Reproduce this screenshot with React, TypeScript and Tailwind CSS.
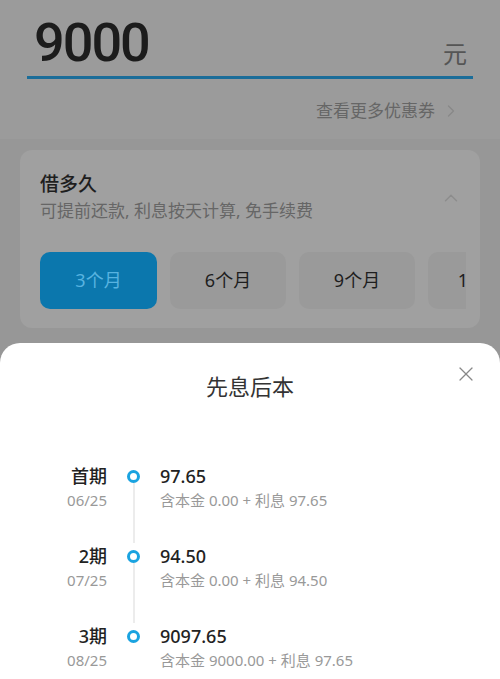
import { ChevronRight, ChevronUp, X } from "lucide-react"

const terms = [
  { label: "3个月", active: true },
  { label: "6个月", active: false },
  { label: "9个月", active: false },
  { label: "12个月", active: false },
]

const plan = [
  { period: "首期", date: "06/25", total: "97.65", detail: "含本金 0.00 + 利息 97.65" },
  { period: "2期", date: "07/25", total: "94.50", detail: "含本金 0.00 + 利息 94.50" },
  { period: "3期", date: "08/25", total: "9097.65", detail: "含本金 9000.00 + 利息 97.65" },
]

const font = { fontFamily: '"Noto Sans", "Noto Sans CJK SC", sans-serif' }

export default function App() {
  return (
    <div className="flex h-[679px] w-[500px] flex-col overflow-hidden bg-[#979797]" style={font}>
      {/* Amount input (dimmed behind sheet) */}
      <div className="bg-[#9b9b9b] px-[27px] pb-[15px] pt-[14px]">
        <div className="flex items-end justify-between border-b-[3px] border-[#1b6d99] pb-[4px]">
          <span
            className="ml-[7px] text-[54px] font-medium leading-[58px] tracking-[-2px] text-[#1c1c1c]"
            style={{ fontFamily: "Roboto, sans-serif" }}
          >
            9000
          </span>
          <span className="mb-[4px] mr-[6px] text-[24px] leading-[28px] text-[#555]">元</span>
        </div>
        <div className="mt-[19px] flex items-center justify-end gap-[6px] pr-[12px] text-[17px] text-[#666]">
          <span>查看更多优惠券</span>
          <ChevronRight className="h-[20px] w-[20px] text-[#888]" strokeWidth={1.5} />
        </div>
      </div>

      {/* Term card */}
      <div className="mx-[20px] mt-[11px] rounded-[12px] bg-[#a0a0a0] pb-[19px] pl-[20px] pt-[21px]">
        <div className="flex items-start justify-between pr-[18px]">
          <div>
            <div className="text-[19px] font-medium leading-[26px] text-[#1e1e1e]">借多久</div>
            <div className="mt-[3px] text-[17px] leading-[22px] text-[#666]">
              可提前还款, 利息按天计算, 免手续费
            </div>
          </div>
          <ChevronUp className="mt-[16px] h-[22px] w-[22px] text-[#8c8c8c]" strokeWidth={1.5} />
        </div>
        <div className="mr-[14px] mt-[30px] flex gap-[13px] overflow-hidden">
          {terms.map((t) => (
            <div
              key={t.label}
              className={
                t.active
                  ? "flex h-[57px] w-[117px] shrink-0 items-center justify-center rounded-[10px] bg-[#0b77ad] text-[18px] text-[#58b3e0]"
                  : "flex h-[57px] w-[116px] shrink-0 items-center justify-center rounded-[10px] bg-[#9a9a9a] text-[18px] text-[#1e1e1e]"
              }
            >
              {t.label}
            </div>
          ))}
        </div>
      </div>

      {/* Bottom sheet */}
      <div className="mt-auto h-[336px] rounded-t-[20px] bg-white">
        <div className="relative flex h-[86px] items-center justify-center pt-[1px]">
          <span className="text-[22px] text-[#333]">先息后本</span>
          <X className="absolute right-[22px] top-[19px] h-[24px] w-[24px] text-[#888]" strokeWidth={1.2} />
        </div>
        <div className="mt-[34px] flex flex-col">
          {plan.map((row, i) => (
            <div key={row.period} className="flex h-[80px]">
              <div className="w-[107px] text-right">
                <div className="text-[18px] font-medium leading-[26px] text-[#222]">{row.period}</div>
                <div className="mt-[1px] text-[15px] leading-[21px] text-[#999]">{row.date}</div>
              </div>
              <div className="flex w-[53px] flex-col items-center">
                <div className="mt-[7px] h-[13px] w-[13px] shrink-0 rounded-full border-[3.5px] border-[#1aa3e0]" />
                {i < plan.length - 1 && <div className="w-[2px] flex-1 bg-[#ececec]" />}
              </div>
              <div>
                <div className="text-[18px] font-medium leading-[26px] text-[#222]">{row.total}</div>
                <div className="mt-[1px] text-[15px] leading-[21px] text-[#999]">{row.detail}</div>
              </div>
            </div>
          ))}
        </div>
      </div>
    </div>
  )
}
